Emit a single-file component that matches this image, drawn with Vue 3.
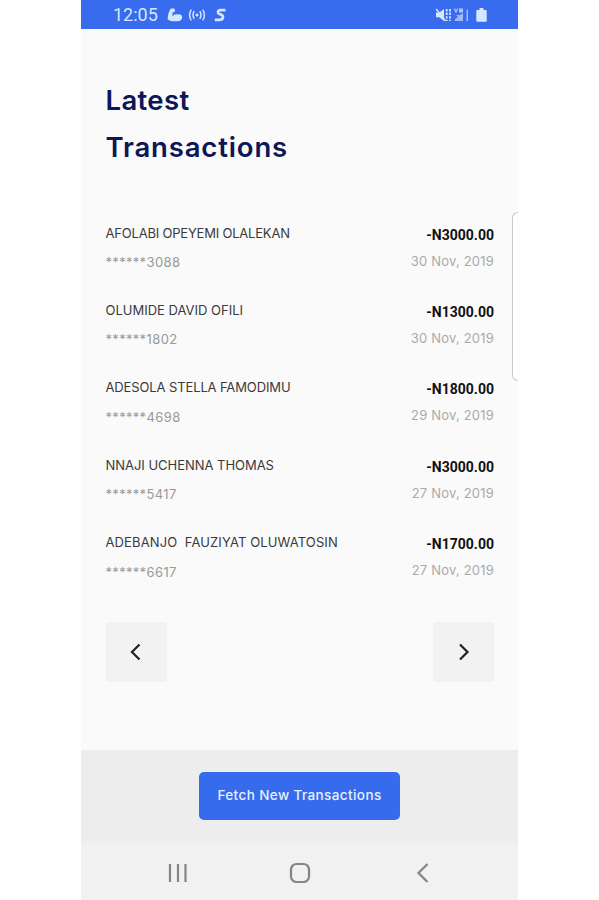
<template>
  <div class="phone">
    <header class="status-bar">
      <div class="status-left">
        <span class="clock">12:05</span>
        <svg class="icon-arm" width="16" height="14" viewBox="0 0 16 14" fill="currentColor">
          <path d="M3.8.6 7.2.5 8.2 2.2 7.2 4.4 5.6 4.1 5.4 8.4C7 6.6 8.8 5.8 10.4 6.6 12.8 5.6 15.2 7 15.2 9.4 15.2 11.6 13.2 13 10 13.2 6.4 13.6 3.2 13 .6 11.4.9 7.2 1.8 3.2 3.8.6z"/>
        </svg>
        <svg class="icon-cast" width="18" height="14" viewBox="0 0 18 14" fill="none" stroke="currentColor" stroke-width="1.5">
          <circle cx="9" cy="7" r="1.5" fill="currentColor" stroke="none"/>
          <path d="M6.2 3.2C4.8 5.4 4.8 8.6 6.2 10.8M3.4 1.6C1 4.6 1 9.4 3.4 12.4M11.8 3.2c1.4 2.2 1.4 5.4 0 7.6M14.6 1.6c2.4 3 2.4 7.8 0 10.8"/>
        </svg>
        <svg class="icon-s" width="13" height="14" viewBox="0 0 13 14" fill="none" stroke="currentColor" stroke-width="2.7">
          <path d="M11.5 2.2H6.6C4.4 2.2 3.6 3.4 4.1 4.8 4.6 6.4 9 6.3 9 8.8 9 11 7.8 11.8 5.8 11.8H.8"/>
        </svg>
      </div>
      <div class="status-right">
        <svg width="17" height="16" viewBox="0 0 17 16" fill="none" stroke="currentColor">
          <path d="M1 5.5h3.2L9 2v12l-4.8-3.8H1z" fill="currentColor" stroke="none"/>
          <path d="M1.2 2 10.5 14" stroke-width="1.4"/>
          <path d="M11.7 2v12M15 2v12" stroke-width="1.8" stroke-dasharray="2.4 1.2"/>
        </svg>
        <svg class="icon-signal" width="16" height="16" viewBox="0 0 16 16" fill="currentColor">
          <path d="M.8 1.5h1.4L3 3.8l.8-2.3h1.3L3.6 5.6H2.3zM6 1.5h4v4H6z" opacity=".75"/>
          <path d="M10 6v8H2v-2l3-2-2-2h4zM13.5 2.5H15V14h-1.5z" opacity=".65"/>
        </svg>
        <svg class="icon-battery" width="11" height="14" viewBox="0 0 11 14" fill="currentColor">
          <path d="M3.5 0h4v2H10q.7 0 .7.8v10q0 1-.9 1H1.2q-.9 0-.9-1v-10q0-.8.7-.8h2.5z"/>
        </svg>
      </div>
    </header>

    <main class="content">
      <h1><span class="latest">Latest</span><br>Transactions</h1>

      <ul class="transactions">
        <li v-for="item in transactions" :key="item.account" class="transaction">
          <div class="details">
            <div class="name" :style="{ letterSpacing: item.tracking + 'px' }">{{ item.name }}</div>
            <div class="account"><span class="mask">******</span><span>{{ item.account }}</span></div>
          </div>
          <div class="summary">
            <div class="amount">{{ item.amount }}</div>
            <div class="date">{{ item.date }}</div>
          </div>
        </li>
      </ul>

      <div class="pager">
        <button class="page-btn" aria-label="Previous">
          <svg width="12" height="18" viewBox="0 0 12 18"><path d="M9.5 1.5 2 9l7.5 7.5"/></svg>
        </button>
        <button class="page-btn" aria-label="Next">
          <svg width="12" height="18" viewBox="0 0 12 18"><path d="M2 1.5 9.5 9 2 16.5"/></svg>
        </button>
      </div>
      <div class="edge-handle"></div>
    </main>

    <section class="actions">
      <button class="fetch-btn">Fetch New Transactions</button>
    </section>

    <nav class="nav-bar">
      <svg width="22" height="22" viewBox="0 0 22 22"><path d="M3 2v18M11 2v18M18.5 2v18"/></svg>
      <svg width="22" height="22" viewBox="0 0 22 22"><rect x="2" y="2" width="18" height="18" rx="5.5"/></svg>
      <svg width="22" height="22" viewBox="0 0 22 22"><path d="M16.5 2 7.5 11l9 9"/></svg>
    </nav>
  </div>
</template>

<script setup>
const transactions = [
  { name: 'AFOLABI OPEYEMI OLALEKAN', account: '3088', amount: '-N3000.00', date: '30 Nov, 2019', tracking: -0.2 },
  { name: 'OLUMIDE DAVID OFILI', account: '1802', amount: '-N1300.00', date: '30 Nov, 2019', tracking: 0 },
  { name: 'ADESOLA STELLA FAMODIMU', account: '4698', amount: '-N1800.00', date: '29 Nov, 2019', tracking: -0.12 },
  { name: 'NNAJI UCHENNA THOMAS', account: '5417', amount: '-N3000.00', date: '27 Nov, 2019', tracking: -0.03 },
  { name: 'ADEBANJO\u00a0 FAUZIYAT OLUWATOSIN', account: '6617', amount: '-N1700.00', date: '27 Nov, 2019', tracking: 0.12 },
];
</script>

<style>
body {
  margin: 0;
  background: #fff;
}
</style>

<style scoped>
.phone {
  width: 437px;
  height: 900px;
  margin-left: 81px;
  display: flex;
  flex-direction: column;
  background: #fafafa;
  font-family: Inter, "Liberation Sans", sans-serif;
  overflow: hidden;
}

.status-bar {
  height: 29px;
  flex: none;
  box-sizing: border-box;
  display: flex;
  justify-content: space-between;
  padding: 0 31px 0 32px;
  background: #386bee;
  color: #d5e6ff;
}

.status-left,
.status-right {
  display: flex;
  align-items: center;
  height: 30px;
}

.clock {
  font: 18px/30px Roboto, sans-serif;
  width: 46px;
  margin-right: 8px;
}

.icon-cast {
  margin-left: 5px;
}

.icon-s {
  margin-left: 8px;
}

.icon-signal {
  margin-left: 1px;
}

.icon-battery {
  margin-left: 7px;
}

.content {
  position: relative;
  height: 721px;
  flex: none;
  box-sizing: border-box;
  padding: 48px 24px 0 24.5px;
}

h1 {
  margin: 0;
  color: #0d1656;
  font-size: 27.5px;
  line-height: 47px;
  font-weight: 600;
  letter-spacing: 0.85px;
}

.latest {
  letter-spacing: 0.35px;
}

.transactions {
  list-style: none;
  margin: 47.5px 0 0;
  padding: 0;
}

.transaction {
  display: flex;
  justify-content: space-between;
  height: 77.4px;
}

.name,
.account {
  font-size: 13px;
  line-height: 29.5px;
  white-space: nowrap;
}

.name {
  color: #3a3a3a;
}

.account {
  display: flex;
  color: #999;
  letter-spacing: 0.4px;
}

.mask {
  width: 41px;
  letter-spacing: 0.3px;
}

.summary {
  text-align: right;
  padding-top: 3px;
}

.amount {
  font: 700 14px/26px Roboto, sans-serif;
  color: #111;
  letter-spacing: 0;
}

.date {
  font-size: 13px;
  line-height: 26px;
  color: #aaa;
  letter-spacing: 0.2px;
  white-space: nowrap;
}

.pager {
  display: flex;
  justify-content: space-between;
  margin-top: 16.5px;
}

.page-btn {
  width: 61px;
  height: 60px;
  padding: 0;
  border: none;
  border-radius: 3px;
  background: #f2f2f2;
  display: flex;
  align-items: center;
  justify-content: center;
}

.page-btn path {
  fill: none;
  stroke: #222;
  stroke-width: 2.2;
}

.edge-handle {
  position: absolute;
  top: 183px;
  right: 0;
  width: 5px;
  height: 167px;
  border: 1px solid #c9c9c9;
  border-right: none;
  border-radius: 6px 0 0 6px;
  background: #fff;
}

.actions {
  height: 93px;
  flex: none;
  box-sizing: border-box;
  padding-top: 22px;
  background: #ededed;
  display: flex;
  justify-content: center;
  align-items: flex-start;
}

.fetch-btn {
  width: 201px;
  height: 48px;
  padding: 0 0 2px;
  border: none;
  border-radius: 5px;
  background: #376bee;
  color: #e6f0ff;
  font: 500 13.5px Inter, sans-serif;
  letter-spacing: 0.4px;
  white-space: nowrap;
}

.nav-bar {
  height: 57px;
  flex: none;
  box-sizing: border-box;
  padding: 2px 85px 0 86px;
  background: #f1f1f1;
  display: flex;
  align-items: center;
  justify-content: space-between;
}

.nav-bar svg {
  fill: none;
  stroke: #858585;
  stroke-width: 2.2;
}
</style>
